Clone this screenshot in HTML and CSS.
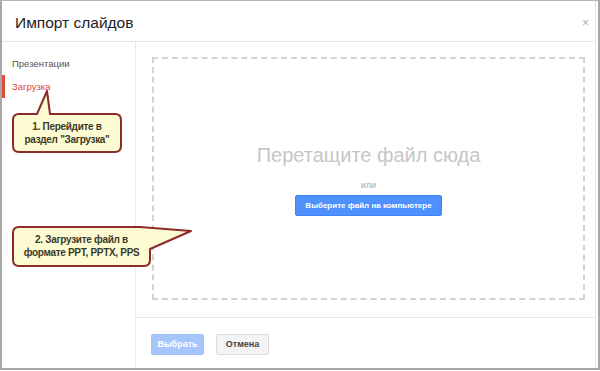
FILE: index.html
```html
<!DOCTYPE html>
<html lang="ru">
<head>
<meta charset="utf-8">
<link rel="stylesheet" href="styles.css">
</head>
<body>
<div class="shot">
  <div class="dialog">
    <div class="header">
      <div class="title">Импорт слайдов</div>
      <div class="close">×</div>
    </div>
    <div class="body">
      <div class="sidebar">
        <div class="nav-item">Презентации</div>
        <div class="nav-item active">Загрузка</div>
      </div>
      <div class="main">
        <div class="content">
          <div class="dropzone">
            <div class="drop-title">Перетащите файл сюда</div>
            <div class="or">или</div>
            <div class="btn-blue">Выберите файл на компьютере</div>
          </div>
        </div>
        <div class="footer">
          <div class="btn btn-disabled">Выбрать</div>
          <div class="btn btn-gray">Отмена</div>
        </div>
      </div>
    </div>
  </div>

  <svg class="callouts" width="600" height="371" viewBox="0 0 600 371">
    <path d="M19,114 L37,114 L47,91 L50,114 L115,114 Q121,114 121,120 L121,146 Q121,152 115,152 L19,152 Q13,152 13,146 L13,120 Q13,114 19,114 Z" fill="#fdfbd2" stroke="#8e2a2a" stroke-width="2" stroke-linejoin="round"/>
    <path d="M19,227 L140,227 L191,231 L150,249 L150,260 Q150,266 144,266 L19,266 Q13,266 13,260 L13,233 Q13,227 19,227 Z" fill="#fdfbd2" stroke="#8e2a2a" stroke-width="2" stroke-linejoin="round"/>
  </svg>
  <div class="note note1">1. Перейдите в<br>раздел "Загрузка"</div>
  <div class="note note2">2. Загрузите файл в<br>формате PPT, PPTX, PPS</div>
</div>
</body>
</html>
```

FILE: styles.css
```css
* { box-sizing: border-box; }
html, body { margin: 0; padding: 0; background: #fff; }
body { font-family: "Liberation Sans", Arial, sans-serif; }

.shot {
  position: relative;
  width: 600px;
  height: 370px;
  border-top: 1px solid #b4b4b4;
  border-left: 2px solid #a8a8a8;
  border-right: 2px solid #a8a8a8;
  border-bottom: 2px solid #a8a8a8;
  overflow: hidden;
}

.dialog {
  width: 594px;
  height: 100%;
  border-right: 1px solid #e6e6e6;
  display: flex;
  flex-direction: column;
}

.header {
  height: 41px;
  border-bottom: 1px solid #e5e5e5;
  display: flex;
  align-items: center;
  justify-content: space-between;
  padding: 3px 6px 0 13px;
  flex: none;
}
.title { font-size: 15.5px; color: #222; }
.close { font-size: 12px; color: #b0b0b0; }

.body { flex: 1; display: flex; min-height: 0; }

.sidebar {
  width: 134px;
  border-right: 1px solid #ebebeb;
  padding-top: 10px;
  flex: none;
}
.nav-item {
  font-size: 9.5px;
  color: #555;
  height: 23px;
  line-height: 23px;
  padding-left: 7px;
  border-left: 3px solid transparent;
}
.nav-item.active {
  color: #dd4b39;
  border-left-color: #dd4b39;
}

.main { flex: 1; display: flex; flex-direction: column; }
.content {
  flex: 1;
  padding: 15px 10px 17px 16px;
  border-bottom: 1px solid #e8e8e8;
  display: flex;
}
.dropzone {
  flex: 1;
  border: 2px dashed #d3d3d3;
  display: flex;
  flex-direction: column;
  align-items: center;
  padding-top: 85px;
}
.drop-title { font-size: 20px; color: #c6c6c6; }
.or { font-size: 9px; color: #a8a8a8; margin-top: 13px; }
.btn-blue {
  margin-top: 5px;
  height: 21px;
  padding: 0 9px;
  background: #4d90fe;
  border: 1px solid #3d83f5;
  border-radius: 2px;
  color: #fff;
  font-weight: bold;
  font-size: 8px;
  line-height: 19px;
}

.footer {
  height: 50px;
  display: flex;
  align-items: flex-start;
  gap: 12px;
  padding: 16px 0 0 15px;
  flex: none;
}
.btn {
  width: 53px;
  height: 21px;
  border-radius: 2px;
  font-size: 9px;
  font-weight: bold;
  line-height: 19px;
  text-align: center;
}
.btn-disabled { background: #a6c6fb; border: 1px solid #9dc0fa; color: #fff; }
.btn-gray { background: #f4f4f4; border: 1px solid #dcdcdc; color: #444; }

.callouts { position: absolute; left: -2px; top: -1px; }
.note {
  position: absolute;
  font-size: 10px;
  font-weight: bold;
  color: #3a3a2a;
  line-height: 13px;
  text-align: center;
  letter-spacing: -0.3px;
}
.note1 { left: 11px; top: 119px; width: 108px; }
.note2 { left: 11px; top: 232px; width: 137px; }
```
